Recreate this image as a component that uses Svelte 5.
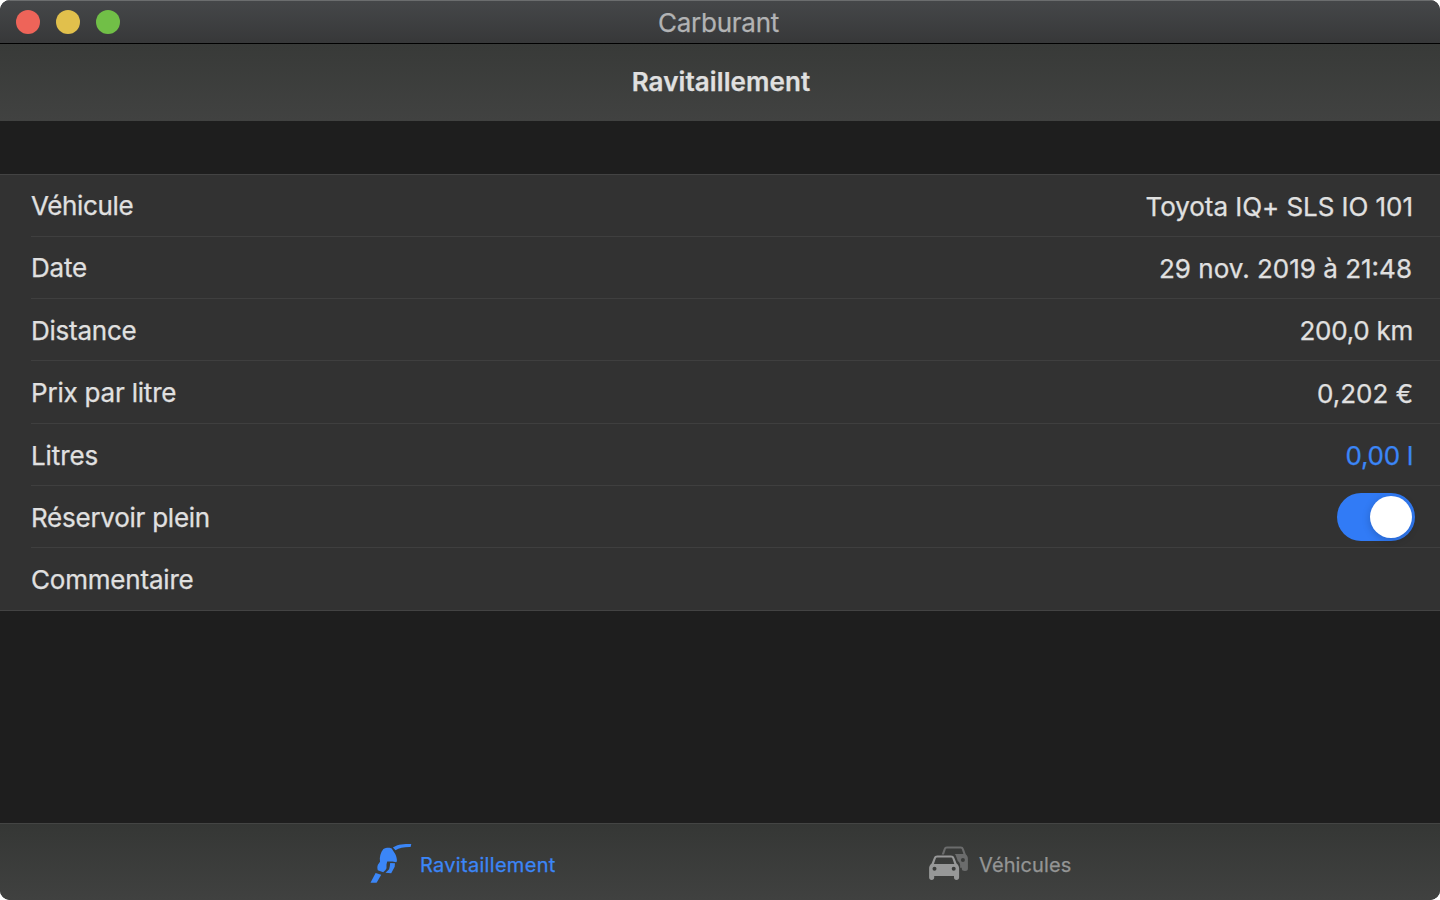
<script>
  const rows = [
    { label: 'Véhicule', value: 'Toyota IQ+ SLS IO 101', ls: -0.35, vs: -0.05 },
    { label: 'Date', value: '29 nov. 2019 à 21:48', ls: -0.2, vs: 0 },
    { label: 'Distance', value: '200,0 km', ls: -0.25, vs: -0.25 },
    { label: 'Prix par litre', value: '0,202 €', ls: -0.2, vs: 0 },
    { label: 'Litres', value: '0,00 l', active: true, ls: -0.1, vs: -0.25 },
    { label: 'Réservoir plein', toggle: true, ls: -0.25, vs: 0 },
    { label: 'Commentaire', ls: -0.2, vs: 0 }
  ];
  let full = $state(true);
</script>

<div class="window">
  <header class="titlebar">
    <div class="lights"><i class="close"></i><i class="min"></i><i class="max"></i></div>
    <span class="title">Carburant</span>
  </header>
  <div class="navbar"><h1>Ravitaillement</h1></div>
  <main>
    <div class="list">
      {#each rows as row}
        <div class="row">
          <span class="label" style:letter-spacing="{row.ls}px">{row.label}</span>
          {#if row.toggle}
            <button class="switch" class:on={full} aria-label={row.label} onclick={() => (full = !full)}><span class="knob"></span></button>
          {:else if row.value}
            <span class="value" class:active={row.active} style:letter-spacing="{row.vs}px">{row.value}</span>
          {/if}
        </div>
      {/each}
    </div>
  </main>
  <nav class="tabs">
    <div class="tab selected">
      <svg width="60" height="55" viewBox="0 0 60 55" fill="currentColor">
        <path d="M32.900 12.600C37 9.500 42 8.800 51.300 9L50.600 12C44 11.900 39.500 12.600 35.500 15.200Z" />
        <path d="M23.400 14C25.700 12.700 30.200 12.400 31.700 13.600L35.200 19C36.400 21.500 37.100 24 36.900 26.300L36.200 27.300L32.500 26.500H27.200L26.500 29.500V33.300C25.700 35 24.700 36 23.200 37.200L17.800 35.200C17.300 33.500 17.100 31.500 17.900 29.700L20 26.800C19.300 22 20.500 17.500 23.400 14Z" />
        <path d="M30.200 27.900L35 28.300L34.700 31.800L31.200 38.300L25.500 37.700L29.100 34.200L29.800 31.200Z" />
        <path d="M15.600 38L21.200 39.800L16.600 47.700H10.500Z" />
      </svg>
      <span>Ravitaillement</span>
    </div>
    <div class="tab">
      <svg width="60" height="55" viewBox="0 0 60 55">
        <path fill="#6b6c6c" fill-rule="evenodd" d="M21.700 19.500L23.700 14C24.300 12.300 25.300 11.500 27 11.500H40.700C42.400 11.500 43.300 12.300 43.900 14L45.800 19.300C47.200 20.500 47.900 22 47.900 24V33.800C47.900 35.300 46.700 36 45 36C42.900 36 41.800 35.300 41.800 33.800V32.700H40.100V30C39.900 28 39 26.800 37.800 26L35.800 20.500C35.400 19.700 35 19.300 34.600 19.100H43.400L41.900 14.500C41.600 13.700 41.200 13.400 40.400 13.400H27.200C26.400 13.400 26 13.700 25.700 14.500L24 19.500ZM42.900 23.100A2 2 0 1 0 42.900 27.100A2 2 0 1 0 42.900 23.100Z" />
        <path fill="#979898" fill-rule="evenodd" d="M11.600 28.400L13.900 22.800C14.500 21.200 15.500 20.400 17.200 20.400H31C32.700 20.400 33.700 21.200 34.300 22.800L36.600 28.400C38.300 29.800 39.100 31.200 39.100 33.200V42.600C39.100 44.200 38 44.900 36.500 44.900C34.900 44.900 34 44.200 34 42.600V41H14.200V42.600C14.200 44.200 13.300 44.900 11.700 44.900C10.200 44.900 9.100 44.200 9.100 42.600V33.200C9.100 31.200 9.900 29.800 11.600 28.400ZM15.800 23.500L13.900 29H34.300L32.400 23.500C32.100 22.700 31.600 22.500 30.900 22.500H17.300C16.600 22.500 16.100 22.700 15.800 23.500ZM14.500 31.700A2 2 0 1 0 14.500 35.700A2 2 0 1 0 14.500 31.700ZM33.700 31.700A2 2 0 1 0 33.700 35.700A2 2 0 1 0 33.700 31.700Z" />
      </svg>
      <span>Véhicules</span>
    </div>
  </nav>
</div>

<style>
  :global(body) { margin: 0; background: #fff; }
  .window {
    width: 1440px; height: 900px; box-sizing: border-box; overflow: hidden;
    display: flex; flex-direction: column; border-radius: 10px;
    background: #1e1e1e; color: #e0e0e0;
    font-family: Inter, "Noto Sans", sans-serif;
    -webkit-text-stroke: 0.25px currentColor;
  }
  .titlebar {
    height: 44px; box-sizing: border-box; flex: none;
    display: grid; grid-template-columns: 1fr auto 1fr; align-items: center;
    border-top: 1px solid #6b6d6e; border-bottom: 1px solid #000;
    background: linear-gradient(#454749, #373839);
  }
  .lights { display: flex; gap: 16px; padding-left: 16px; }
  .lights i { width: 24px; height: 24px; border-radius: 50%; }
  .close { background: #ee6459; }
  .min { background: #e1c04c; }
  .max { background: #71bf47; }
  .title { font-size: 26px; line-height: 40px; color: #b2b3b4; letter-spacing: -0.25px; padding: 2px 3px 0 0; }
  .navbar {
    height: 77px; flex: none; display: flex; justify-content: center;
    background: linear-gradient(#383a38, #414241);
  }
  h1 { margin: 0; padding-left: 2px; font-size: 26px; font-weight: 600; line-height: 75px; letter-spacing: 0.1px; }
  main { flex: 1; padding-top: 53px; }
  .list { background: #323232; border: solid #434343; border-width: 1px 0; }
  .row {
    height: 62px; box-sizing: border-box; margin-left: 31px; padding-right: 27px;
    display: flex; align-items: center; justify-content: space-between;
    font-size: 26px; border-bottom: 1px solid #3f3f3f;
  }
  .row:nth-child(4) { height: 63px; }
  .row:nth-child(2) { padding-right: 28px; }
  .row:last-child { border-bottom: 0; }
  .label, .value { line-height: 60px; white-space: nowrap; }
  .label { padding-top: 1px; }
  .value { padding-top: 2px; }
  .row:nth-child(n + 5) .label, .row:nth-child(3) .label { padding-top: 2px; }
  .row:nth-child(3) .value, .row:nth-child(5) .value { padding-top: 3px; }
  .row:nth-child(4) .value { padding-top: 4px; }
  .value.active { color: #3b86f7; }
  .switch {
    width: 78.500px; height: 48px; padding: 3px; margin: 1px -2.200px 0 0; border: 0; border-radius: 24px;
    background: #5a5a5a; display: flex; align-items: center;
  }
  .switch.on { background: #317bf6; justify-content: flex-end; }
  .knob { width: 42px; height: 42px; border-radius: 50%; background: #fff; box-shadow: 0 2px 8px #0003; }
  .tabs {
    height: 77px; box-sizing: border-box; flex: none; padding-left: 360px;
    display: grid; grid-template-columns: 560px auto;
    border-top: 1px solid #444544; background: linear-gradient(#353735, #404140);
  }
  .tab { display: flex; color: #949595; font-size: 20px; }
  .tab svg { flex: none; margin-top: 11px; }
  .tab span { line-height: 82px; letter-spacing: 0.3px; }
  .tab + .tab span { margin-left: -1px; letter-spacing: 0.1px; }
  .tab.selected { color: #3b86f7; }
</style>
